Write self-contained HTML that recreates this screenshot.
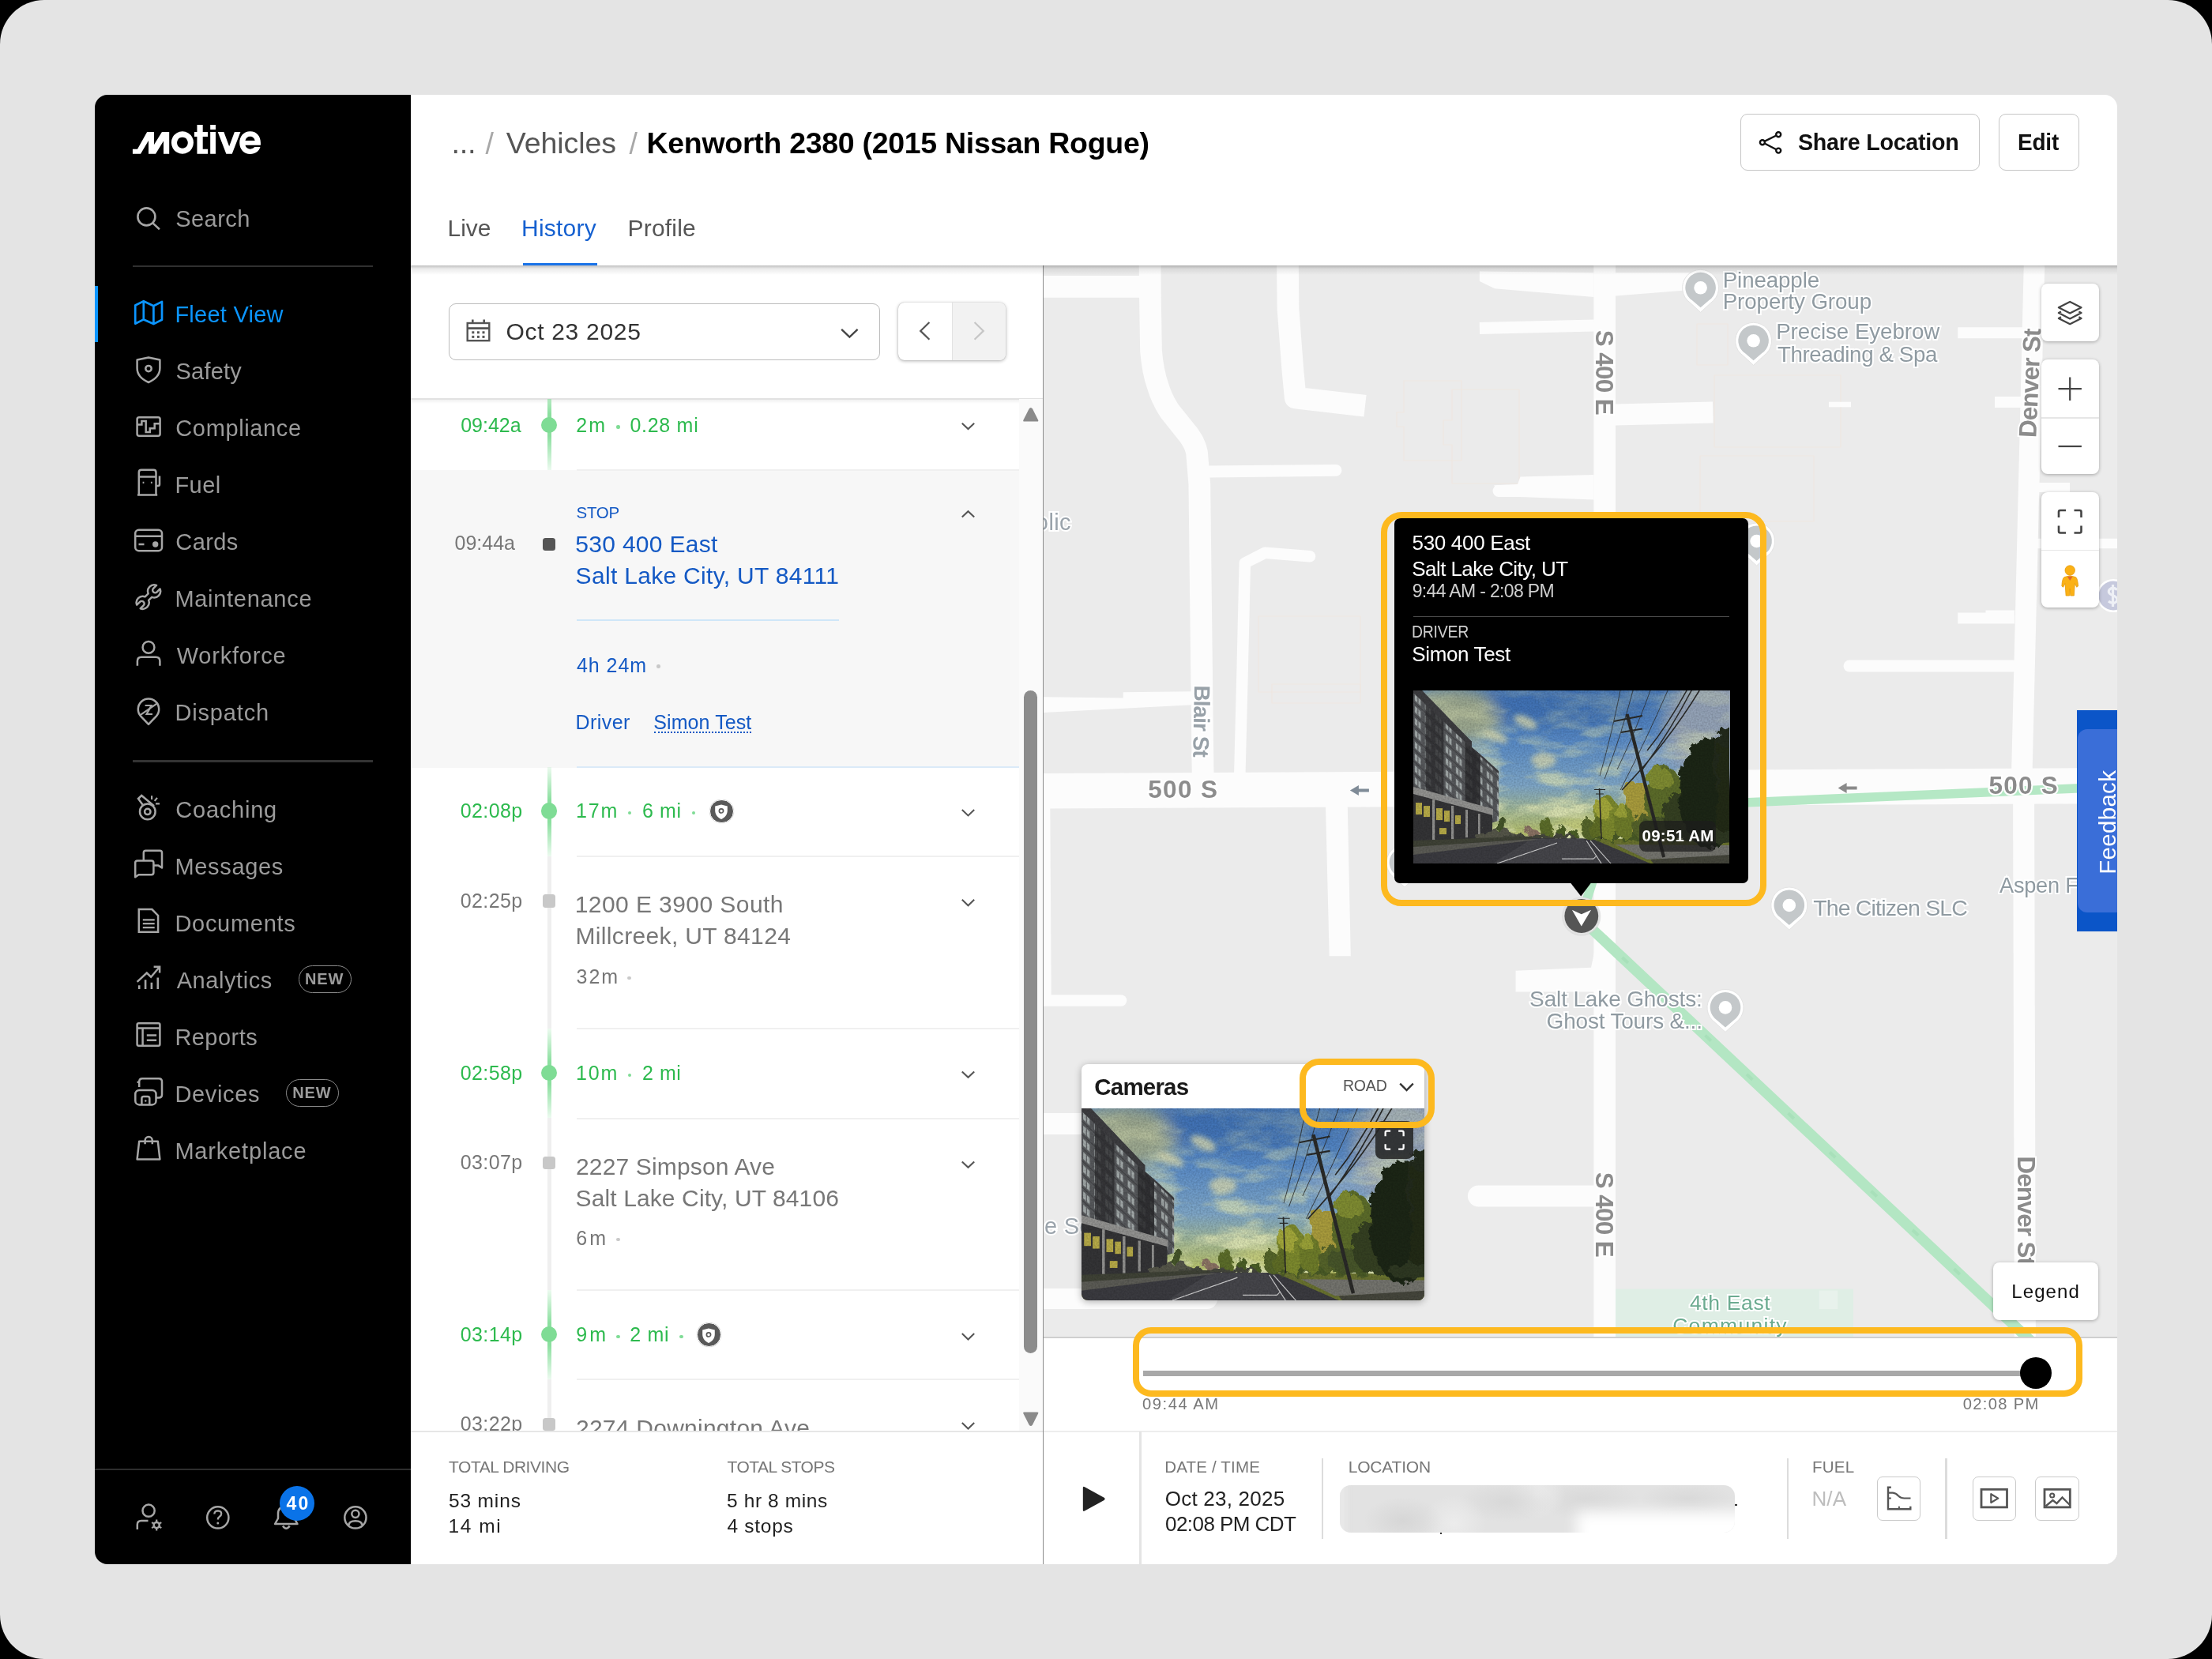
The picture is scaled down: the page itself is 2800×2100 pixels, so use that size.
<!DOCTYPE html>
<html><head><meta charset="utf-8"><title>Fleet View</title><style>
html,body{margin:0;padding:0;}
body{width:2800px;height:2100px;background:#000;overflow:hidden;position:relative;font-family:"Liberation Sans",sans-serif;}
.t{position:absolute;line-height:1;white-space:nowrap;}
.b{position:absolute;box-sizing:border-box;}
svg{position:absolute;overflow:visible;}
#page{position:absolute;left:0;top:0;width:2800px;height:2100px;background:#e4e4e4;border-radius:56px;overflow:hidden;will-change:transform;}
#app{position:absolute;left:120px;top:120px;width:2560px;height:1860px;background:#fff;border-radius:16px;overflow:hidden;}
</style></head><body><div id="page">
<div class="b" style="left:120.0px;top:120.0px;width:2560.0px;height:1860.0px;background:#fff;border-radius:16px;"></div>
<div class="b" style="left:120.0px;top:120.0px;width:400.0px;height:1860.0px;background:#000;border-radius:16px 0 0 16px;"></div>
<svg style="left:150px;top:140px" width="200" height="80" viewBox="0 0 2212 885">
<g fill="#fff">
<path d="M198 607V540H265L400 298H497V478L608 298H710V607H630V425L520 607H420V420L310 607Z"/>
<path d="M895 290a155 158 0 1 0 .1 0ZM895 372a76 78 0 1 1 -.1 0Z" fill-rule="evenodd"/>
<path d="M1100 198H1180V298H1250V365H1180V540H1250V607H1100V365H1062V298H1100Z"/>
<path d="M1285 198H1360V265H1285ZM1285 298H1360V607H1285Z"/>
<path d="M1390 298H1475L1550 500L1625 298H1708L1590 607H1508Z"/>
<path d="M1843 290C1935 290 1990 360 1990 450V485H1775C1782 520 1810 538 1845 538C1872 538 1893 528 1905 510H1985C1968 570 1915 608 1845 608C1755 608 1695 540 1695 450C1695 358 1755 290 1843 290ZM1775 420H1910C1903 385 1878 362 1843 362C1808 362 1783 385 1775 420Z" fill-rule="evenodd"/>
</g></svg>
<svg style="left:160px;top:250px" width="50" height="50" viewBox="160 250 50 50"><g fill="none" stroke="#a6a6a6" stroke-width="2.6"><circle cx="185.4" cy="274.4" r="11"/><path d="M193.4 282.4L201.9 290.2"/></g></svg>
<div class="t" style="left:222.2px;top:262.8px;font-size:29px;color:#9b9b9b;letter-spacing:0.46px;">Search</div>
<div class="b" style="left:168.0px;top:335.5px;width:304.0px;height:2.0px;background:#303030;"></div>
<div class="b" style="left:168.0px;top:961.5px;width:304.0px;height:3.0px;background:#333;"></div>
<div class="b" style="left:120.0px;top:1859.0px;width:400.0px;height:2.0px;background:#2e2e2e;"></div>
<div class="b" style="left:120.0px;top:362.0px;width:3.5px;height:71.0px;background:#0b95ff;"></div>
<div class="t" style="left:221.4px;top:383.5px;font-size:29px;color:#0b95ff;letter-spacing:0.25px;">Fleet View</div>
<div class="t" style="left:222.5px;top:455.5px;font-size:29px;color:#9b9b9b;letter-spacing:0.23px;">Safety</div>
<div class="t" style="left:222.3px;top:527.5px;font-size:29px;color:#9b9b9b;letter-spacing:0.63px;">Compliance</div>
<div class="t" style="left:221.4px;top:599.5px;font-size:29px;color:#9b9b9b;letter-spacing:0.47px;">Fuel</div>
<div class="t" style="left:222.3px;top:671.5px;font-size:29px;color:#9b9b9b;letter-spacing:0.42px;">Cards</div>
<div class="t" style="left:221.4px;top:743.5px;font-size:29px;color:#9b9b9b;letter-spacing:0.71px;">Maintenance</div>
<div class="t" style="left:223.7px;top:815.5px;font-size:29px;color:#9b9b9b;letter-spacing:0.79px;">Workforce</div>
<div class="t" style="left:221.4px;top:887.5px;font-size:29px;color:#9b9b9b;letter-spacing:0.85px;">Dispatch</div>
<div class="t" style="left:222.3px;top:1010.5px;font-size:29px;color:#9b9b9b;letter-spacing:0.76px;">Coaching</div>
<div class="t" style="left:221.4px;top:1082.5px;font-size:29px;color:#9b9b9b;letter-spacing:0.68px;">Messages</div>
<div class="t" style="left:221.4px;top:1154.5px;font-size:29px;color:#9b9b9b;letter-spacing:0.72px;">Documents</div>
<div class="t" style="left:223.7px;top:1226.5px;font-size:29px;color:#9b9b9b;letter-spacing:0.57px;">Analytics</div>
<div class="t" style="left:221.4px;top:1298.5px;font-size:29px;color:#9b9b9b;letter-spacing:0.45px;">Reports</div>
<div class="t" style="left:221.4px;top:1370.5px;font-size:29px;color:#9b9b9b;letter-spacing:0.68px;">Devices</div>
<div class="t" style="left:221.4px;top:1442.5px;font-size:29px;color:#9b9b9b;letter-spacing:0.82px;">Marketplace</div>
<svg style="left:169px;top:380px" width="38" height="36" viewBox="0 0 38 36"><g fill="none" stroke="#0b95ff" stroke-width="2.7" stroke-linejoin="round"><path d="M2.2 6.5L12.8 1.2L25.4 7.2L36 1.9V24.8L25.4 30.1L12.8 24.4L2.2 29.7Z M12.8 1.2V24.4 M25.4 7.2V30.1"/></g></svg>
<svg style="left:169px;top:452px" width="38" height="36" viewBox="0 0 38 36"><g fill="none" stroke="#a6a6a6" stroke-width="2.5" stroke-linejoin="round"><path d="M19 0.5L4.6 3.4V14C4.6 22 10 28 19 32C28 28 33.4 22 33.4 14V3.4Z"/><circle cx="19" cy="14.6" r="3.7"/></g></svg>
<svg style="left:169px;top:524px" width="38" height="36" viewBox="0 0 38 36"><g fill="none" stroke="#a6a6a6" stroke-width="2.5" stroke-linejoin="round"><rect x="4.6" y="4.2" width="29" height="23.6" rx="2.5"/><path d="M4.6 13.6H10.4V9H15.7V22.9H20.8V18.3H26.7V12.3H33.6" stroke-linejoin="miter"/></g></svg>
<svg style="left:169px;top:596px" width="38" height="36" viewBox="0 0 38 36"><g fill="none" stroke="#a6a6a6" stroke-width="2.5" stroke-linejoin="round"><path d="M6.8 30.4V2Q6.8 -1.2 10 -1.2H25.3Q28.5 -1.2 28.5 2V30.4 M5 30.4H30.2 M6.8 7.6H28.5 M28.5 19H31Q33 19 33 17V6.5"/><path d="M11.6 14.8h1.8M21.9 14.8h1.8" stroke-width="2.2"/></g></svg>
<svg style="left:169px;top:668px" width="38" height="36" viewBox="0 0 38 36"><g fill="none" stroke="#a6a6a6" stroke-width="2.5" stroke-linejoin="round"><rect x="2.2" y="2.8" width="33.8" height="26.5" rx="4.5"/><path d="M2.2 10.8H36 M6.5 21H13.5"/><circle cx="27.7" cy="21" r="3.7" fill="#a6a6a6" stroke="none"/></g></svg>
<svg style="left:169px;top:740px" width="38" height="36" viewBox="0 0 38 36"><g transform="translate(18.9,15.6) rotate(-45)"><path d="M2.87 -3.2A8 8 0 0 1 17.53 -3.2L12 -3.2A3.2 3.2 0 0 0 12 3.2L17.53 3.2A8 8 0 0 1 2.87 3.2L-2.87 3.2A8 8 0 0 1 -17.53 3.2L-12 3.2A3.2 3.2 0 0 0 -12 -3.2L-17.53 -3.2A8 8 0 0 1 -2.87 -3.2Z" fill="none" stroke="#a6a6a6" stroke-width="2.5" stroke-linejoin="round"/></g></svg>
<svg style="left:169px;top:812px" width="38" height="36" viewBox="0 0 38 36"><g fill="none" stroke="#a6a6a6" stroke-width="2.5" stroke-linejoin="round"><circle cx="19" cy="7.4" r="7.4"/><path d="M4.9 30.8V25Q4.9 19.8 10 19.8H28.3Q33.4 19.8 33.4 25V30.8"/></g></svg>
<svg style="left:169px;top:884px" width="38" height="36" viewBox="0 0 38 36"><g fill="none" stroke="#a6a6a6" stroke-width="2.5" stroke-linejoin="round"><path d="M19 32.8L9.2 22.6A13.2 13.2 0 1 1 28.8 22.6Z"/><path d="M8.2 21.3L31 5.6" stroke-width="2.2"/><path d="M14.6 9H22.6L16.6 20H24" stroke-width="2.2" stroke-linejoin="miter"/></g></svg>
<svg style="left:169px;top:1007px" width="38" height="36" viewBox="0 0 38 36"><g fill="none" stroke="#a6a6a6" stroke-width="2.5" stroke-linejoin="round"><circle cx="17.8" cy="20.4" r="9.8"/><circle cx="17.8" cy="20.4" r="3.7"/><path d="M12.2 12.4L6 4L10.2 0L26 13.2" stroke-linejoin="miter"/><path d="M23.1 0.2V4.9M30 2.9L26.7 6.9M28 10.4H33" stroke-width="2.2"/></g></svg>
<svg style="left:169px;top:1079px" width="38" height="36" viewBox="0 0 38 36"><g fill="none" stroke="#a6a6a6" stroke-width="2.5" stroke-linejoin="round"><path d="M12.8 10V0.5Q12.8 -2.2 15.5 -2.2H33.3Q36 -2.2 36 0.5V19.5L31.5 16.6H26"/><path d="M2.2 31.2V13Q2.2 10.4 5 10.4H22.7Q25.4 10.4 25.4 13V25.6Q25.4 28.3 22.7 28.3H6.5Z"/></g></svg>
<svg style="left:169px;top:1151px" width="38" height="36" viewBox="0 0 38 36"><g fill="none" stroke="#a6a6a6" stroke-width="2.5" stroke-linejoin="round"><path d="M6.8 0.1H23.4L31.1 8V28.8H6.8Z" stroke-linejoin="miter"/><path d="M11.8 13.3H26.7M11.8 18.2H26.7M11.8 23.2H26.7" stroke-width="2.3"/></g></svg>
<svg style="left:169px;top:1223px" width="38" height="36" viewBox="0 0 38 36"><g fill="none" stroke="#a6a6a6" stroke-width="2.5" stroke-linejoin="round"><path d="M7.2 24.2V29.1M15.1 17.2V29.1M22.9 20.7V29.1M30.8 14.6V29.1" stroke-width="2.6"/><path d="M4.6 19.8L16.8 8.5L22.1 13.7L33.1 0.8M25.6 0.8H33.1V8.5" stroke-linejoin="miter"/></g></svg>
<svg style="left:169px;top:1295px" width="38" height="36" viewBox="0 0 38 36"><g fill="none" stroke="#a6a6a6" stroke-width="2.5" stroke-linejoin="round"><rect x="4.6" y="0.3" width="28.8" height="28.4" rx="2"/><path d="M4.6 6.4H33.4M11.6 6.4V28.7M16.8 15.5H29.1M16.8 21.7H29.1"/></g></svg>
<svg style="left:169px;top:1367px" width="38" height="36" viewBox="0 0 38 36"><g fill="none" stroke="#a6a6a6" stroke-width="2.5" stroke-linejoin="round"><path d="M4.6 2.8H7.2M7.2 9V2.2Q7.2 -1.8 11.2 -1.8H32Q36 -1.8 36 2.2V18.6Q36 22.6 32 22.6H28.5"/><rect x="2.3" y="13" width="26.2" height="18.4" rx="5"/><path d="M10.4 31.4V23.4Q10.4 20.9 12.9 20.9H17.8Q20.3 20.9 20.3 23.4V31.4"/><circle cx="15.3" cy="26.5" r="1.2" fill="#a6a6a6" stroke="none"/></g></svg>
<svg style="left:169px;top:1439px" width="38" height="36" viewBox="0 0 38 36"><g fill="none" stroke="#a6a6a6" stroke-width="2.5" stroke-linejoin="round"><path d="M7.2 5.7H30.8L33.4 28.4H4.6Z"/><path d="M14.6 9.2V4.7A4.6 4.6 0 0 1 23.8 4.7V9.2"/></g></svg>
<div class="b" style="left:377.5px;top:1222.0px;width:67.0px;height:35.0px;border:1.6px solid #8a8a8a;border-radius:18px;"></div>
<div class="t" style="left:386.0px;top:1229.3px;font-size:20px;color:#9b9b9b;font-weight:700;letter-spacing:0.85px;">NEW</div>
<div class="b" style="left:361.7px;top:1366.0px;width:67.0px;height:35.0px;border:1.6px solid #8a8a8a;border-radius:18px;"></div>
<div class="t" style="left:370.2px;top:1373.3px;font-size:20px;color:#9b9b9b;font-weight:700;letter-spacing:0.85px;">NEW</div>
<svg style="left:160px;top:1880px" width="340" height="80" viewBox="160 1880 340 80"><g fill="none" stroke="#a6a6a6" stroke-width="2.5">
<circle cx="188.1" cy="1912.2" r="7.6"/><path d="M173.8 1936V1930Q173.8 1925 178.8 1925H187.5"/>
<circle cx="198.2" cy="1930.6" r="3.6"/><path d="M198.2 1923.6v3.4M198.2 1934.2v3.4M192.1 1927.1l3 1.7M201.3 1932.4l3 1.7M192.1 1934.1l3 -1.7M201.3 1928.8l3 -1.7" stroke-width="2.2"/>
<circle cx="275.8" cy="1920.9" r="13.6"/>
<path d="M271.3 1916.5Q271.6 1912.3 275.9 1912.3Q280.2 1912.5 280.2 1916Q280.2 1918.3 277.9 1919.7Q275.8 1921 275.8 1923.6" stroke-width="2.3"/><circle cx="275.8" cy="1928" r="1.5" fill="#a6a6a6" stroke="none"/>
<path d="M352 1916Q352 1907 362.3 1907Q372.6 1907 372.6 1916V1922L376.5 1929H348.1L352 1922Z" stroke-linejoin="round"/><path d="M358 1931.5Q362.3 1938 366.6 1931.5"/>
<circle cx="449.9" cy="1920.9" r="13.6"/><circle cx="449.9" cy="1916.3" r="4.6"/><path d="M441.6 1930.6Q441.6 1925.2 449.9 1925.2Q458.2 1925.2 458.2 1930.6"/>
</g></svg>
<div class="b" style="left:353.5px;top:1880.7px;width:44.6px;height:44.6px;background:#0a73e8;border-radius:50%;"></div>
<div class="t" style="left:362.5px;top:1892.0px;font-size:23px;color:#fff;font-weight:700;letter-spacing:2.21px;">40</div>
<div class="t" style="left:571.5px;top:162.0px;font-size:38px;color:#555;letter-spacing:-0.3px;">...</div>
<div class="t" style="left:614.5px;top:162.5px;font-size:37.5px;color:#a8a8a8;transform:scaleY(1.05);">/</div>
<div class="t" style="left:640.8px;top:162.5px;font-size:37.5px;color:#555;letter-spacing:-0.05px;">Vehicles</div>
<div class="t" style="left:796.5px;top:162.5px;font-size:37.5px;color:#a8a8a8;transform:scaleY(1.05);">/</div>
<div class="t" style="left:818.5px;top:162.5px;font-size:37.5px;color:#000;font-weight:700;letter-spacing:-0.30px;">Kenworth 2380 (2015 Nissan Rogue)</div>
<div class="b" style="left:2203.0px;top:144.0px;width:302.5px;height:72.0px;border:1.6px solid #c6c6c6;border-radius:9px;background:#fff;"></div>
<div class="b" style="left:2530.0px;top:144.0px;width:101.6px;height:72.0px;border:1.6px solid #c6c6c6;border-radius:9px;background:#fff;"></div>
<svg style="left:2220px;top:160px" width="40" height="40" viewBox="2220 160 40 40"><g fill="none" stroke="#111" stroke-width="2.4"><path d="M2233.6 178.9L2248.5 171.5M2233.6 181.5L2248.5 189.3"/><circle cx="2230.9" cy="180.2" r="3"/><circle cx="2251.2" cy="170.2" r="3"/><circle cx="2251.2" cy="190.6" r="3"/></g></svg>
<div class="t" style="left:2276.2px;top:164.5px;font-size:30px;color:#111;font-weight:700;letter-spacing:-0.25px;transform:scaleX(0.9548);transform-origin:0 50%;">Share Location</div>
<div class="t" style="left:2553.6px;top:164.5px;font-size:30px;color:#111;font-weight:700;letter-spacing:-0.25px;transform:scaleX(0.9339);transform-origin:0 50%;">Edit</div>
<div class="t" style="left:566.5px;top:274.0px;font-size:30px;color:#555;letter-spacing:-0.01px;">Live</div>
<div class="t" style="left:660.0px;top:274.0px;font-size:30px;color:#1560d0;letter-spacing:0.23px;">History</div>
<div class="t" style="left:794.5px;top:274.0px;font-size:30px;color:#555;letter-spacing:0.21px;">Profile</div>
<div class="b" style="left:662.3px;top:332.6px;width:94.1px;height:3.6px;background:#1a73e8;"></div>
<div class="b" style="left:568.0px;top:384.0px;width:545.5px;height:72.0px;border:1.6px solid #bcbcbc;border-radius:9px;background:#fff;"></div>
<svg style="left:588px;top:402px" width="36" height="34" viewBox="588 402 36 34"><g fill="none" stroke="#555" stroke-width="2.4"><rect x="591.7" y="409" width="27.6" height="22.2"/><path d="M591.7 415.6H619.3" stroke-width="2.8"/><path d="M598.3 404.6V409M612.7 404.6V409" stroke-width="2.6"/></g><g fill="#555"><rect x="597.3" y="419.3" width="3" height="3"/><rect x="603.9" y="419.3" width="3" height="3"/><rect x="610.5" y="419.3" width="3" height="3"/><rect x="597.3" y="424.9" width="3" height="3"/><rect x="603.9" y="424.9" width="3" height="3"/><rect x="610.5" y="424.9" width="3" height="3"/></g></svg>
<div class="t" style="left:640.4px;top:405.1px;font-size:30px;color:#333;letter-spacing:0.70px;">Oct 23 2025</div>
<svg style="left:1060px;top:410px" width="30" height="24" viewBox="1060 410 30 24"><path d="M1065.2 416.8L1075.4 426.6L1085.6 416.8" fill="none" stroke="#444" stroke-width="2.3"/></svg>
<div class="b" style="left:1137.0px;top:383.0px;width:135.8px;height:73.3px;border-radius:8px;background:#fff;box-shadow:0 1px 4px rgba(0,0,0,.32),0 0 1px rgba(0,0,0,.3);"></div>
<div class="b" style="left:1205.0px;top:383.0px;width:67.8px;height:73.3px;border-radius:0 8px 8px 0;background:#f2f2f2;border-left:1.5px solid #e2e2e2;"></div>
<svg style="left:1150px;top:400px" width="110" height="40" viewBox="1150 400 110 40"><path d="M1176.4 408L1165.2 418.9L1176.4 429.8" fill="none" stroke="#555" stroke-width="2.2"/><path d="M1233.6 408L1244.8 418.9L1233.6 429.8" fill="none" stroke="#c6c6c6" stroke-width="2.2"/></svg>
<div class="b" style="left:520.0px;top:503.6px;width:800.0px;height:2.2px;background:#e2e2e2;"></div>
<div class="b" style="left:520.0px;top:505.8px;width:770.0px;height:5.0px;background:linear-gradient(#f1f1f1,#fff);"></div>
<div class="b" style="left:520px;top:505px;width:800px;height:1306px;overflow:hidden;">
<div class="b" style="left:0.0px;top:90.0px;width:770.0px;height:376.5px;background:#f7f7f7;"></div>
<div class="b" style="left:210.0px;top:465.0px;width:560.0px;height:2.0px;background:#dbeaf8;"></div>
<div class="b" style="left:172.6px;top:-23.0px;width:5.0px;height:113.0px;background:linear-gradient(rgba(127,220,149,.15),rgba(127,220,149,.9) 37%,rgba(127,220,149,.9) 62%,rgba(127,220,149,.15));"></div>
<div class="b" style="left:172.6px;top:466.0px;width:5.0px;height:113.0px;background:linear-gradient(rgba(127,220,149,.15),rgba(127,220,149,.9) 37%,rgba(127,220,149,.9) 62%,rgba(127,220,149,.15));"></div>
<div class="b" style="left:172.6px;top:579.0px;width:5.0px;height:218.0px;background:#efefef;"></div>
<div class="b" style="left:172.6px;top:797.0px;width:5.0px;height:113.0px;background:linear-gradient(rgba(127,220,149,.15),rgba(127,220,149,.9) 37%,rgba(127,220,149,.9) 62%,rgba(127,220,149,.15));"></div>
<div class="b" style="left:172.6px;top:910.0px;width:5.0px;height:218.0px;background:#efefef;"></div>
<div class="b" style="left:172.6px;top:1128.0px;width:5.0px;height:113.0px;background:linear-gradient(rgba(127,220,149,.15),rgba(127,220,149,.9) 37%,rgba(127,220,149,.9) 62%,rgba(127,220,149,.15));"></div>
<div class="b" style="left:172.6px;top:1241.0px;width:5.0px;height:84.0px;background:#efefef;"></div>
<div class="b" style="left:210.0px;top:89.0px;width:560.0px;height:2.0px;background:#f0f0f0;"></div>
<div class="b" style="left:210.0px;top:578.0px;width:560.0px;height:2.0px;background:#f0f0f0;"></div>
<div class="b" style="left:210.0px;top:796.0px;width:560.0px;height:2.0px;background:#f0f0f0;"></div>
<div class="b" style="left:210.0px;top:909.5px;width:560.0px;height:2.0px;background:#f0f0f0;"></div>
<div class="b" style="left:210.0px;top:1127.0px;width:560.0px;height:2.0px;background:#f0f0f0;"></div>
<div class="b" style="left:210.0px;top:1240.0px;width:560.0px;height:2.0px;background:#f0f0f0;"></div>
<div class="t" style="left:63.2px;top:21.3px;font-size:25px;color:#2dba4e;letter-spacing:0.00px;">09:42a</div>
<div class="b" style="left:164.7px;top:22.6px;width:20.8px;height:20.8px;background:#7fdc95;border-radius:50%;"></div>
<div class="t" style="left:209.2px;top:21.3px;font-size:25px;color:#2dba4e;letter-spacing:2.18px;">2m</div>
<div class="b" style="left:260.3px;top:33.3px;width:4.4px;height:4.4px;background:#7fdc95;border-radius:50%;"></div>
<div class="t" style="left:277.5px;top:21.3px;font-size:25px;color:#2dba4e;letter-spacing:0.70px;">0.28 mi</div>
<svg style="left:0;top:0" width="800" height="1306"><path d="M697.8 30.699999999999953L705.5 38.09999999999995L713.2 30.699999999999953" fill="none" stroke="#555" stroke-width="2.1"/></svg>
<div class="t" style="left:55.5px;top:170.4px;font-size:25px;color:#777;letter-spacing:0.00px;">09:44a</div>
<div class="b" style="left:166.8px;top:176.0px;width:16.6px;height:16.2px;background:#555;border-radius:3.5px;"></div>
<div class="t" style="left:209.6px;top:133.5px;font-size:20.5px;color:#1459c4;letter-spacing:-0.28px;">STOP</div>
<div class="t" style="left:208.3px;top:169.2px;font-size:30px;color:#1459c4;letter-spacing:0.30px;">530 400 East</div>
<div class="t" style="left:208.6px;top:208.9px;font-size:30px;color:#1459c4;letter-spacing:0.31px;">Salt Lake City, UT 84111</div>
<div class="b" style="left:210.0px;top:279.0px;width:332.0px;height:1.6px;background:#cfe6f8;"></div>
<div class="t" style="left:209.9px;top:324.7px;font-size:25px;color:#1459c4;letter-spacing:0.97px;">4h 24m</div>
<div class="b" style="left:311.4px;top:336.3px;width:4.4px;height:4.4px;background:#c9c9c9;border-radius:50%;"></div>
<div class="t" style="left:208.4px;top:396.6px;font-size:25px;color:#1459c4;letter-spacing:0.46px;">Driver</div>
<div class="t" style="left:307.3px;top:396.6px;font-size:25px;color:#1459c4;letter-spacing:0.08px;">Simon Test</div>
<div class="b" style="left:308.4px;top:420.6px;width:122.6px;height:0.0px;border-bottom:2px dotted #1459c4;"></div>
<svg style="left:0;top:0" width="800" height="1306"><path d="M697.8 149.6L705.5 142.2L713.2 149.6" fill="none" stroke="#555" stroke-width="2.1"/></svg>
<div class="t" style="left:62.8px;top:509.1px;font-size:25px;color:#2dba4e;letter-spacing:0.37px;">02:08p</div>
<div class="b" style="left:164.7px;top:511.1px;width:20.8px;height:20.8px;background:#7fdc95;border-radius:50%;"></div>
<div class="t" style="left:209.1px;top:509.1px;font-size:25px;color:#2dba4e;letter-spacing:1.86px;">17m</div>
<div class="b" style="left:274.6px;top:521.8px;width:4.4px;height:4.4px;background:#7fdc95;border-radius:50%;"></div>
<div class="t" style="left:292.9px;top:509.1px;font-size:25px;color:#2dba4e;letter-spacing:0.61px;">6 mi</div>
<div class="b" style="left:356.1px;top:521.8px;width:4.4px;height:4.4px;background:#7fdc95;border-radius:50%;"></div>
<div class="b" style="left:378.0px;top:506.6px;width:30.8px;height:30.8px;background:#595959;border-radius:50%;border:1.2px solid #fff;box-shadow:0 0 1px rgba(0,0,0,.25);"></div>
<svg style="left:377.4px;top:506px" width="32" height="32" viewBox="-16 -16 32 32"><path d="M0 -8.6L-7.8 -6.4V-1C-7.8 4.5 -4 8.2 0 10C4 8.2 7.8 4.5 7.8 -1V-6.4Z" fill="#fff"/><circle cx="0" cy="-0.6" r="2.6" fill="none" stroke="#595959" stroke-width="1.7"/></svg>
<svg style="left:0;top:0" width="800" height="1306"><path d="M697.8 519.9999999999999L705.5 527.3999999999999L713.2 519.9999999999999" fill="none" stroke="#555" stroke-width="2.1"/></svg>
<div class="t" style="left:62.8px;top:623.0px;font-size:25px;color:#777;letter-spacing:0.37px;">02:25p</div>
<div class="b" style="left:166.8px;top:627.4px;width:16.6px;height:16.2px;background:#c8c8c8;border-radius:3.5px;"></div>
<div class="t" style="left:207.7px;top:625.1px;font-size:30px;color:#777;letter-spacing:0.43px;">1200 E 3900 South</div>
<div class="t" style="left:208.5px;top:665.2px;font-size:30px;color:#777;letter-spacing:0.34px;">Millcreek, UT 84124</div>
<div class="t" style="left:209.5px;top:719.4px;font-size:25px;color:#777;letter-spacing:1.98px;">32m</div>
<div class="b" style="left:274.3px;top:730.8px;width:4.4px;height:4.4px;background:#c9c9c9;border-radius:50%;"></div>
<svg style="left:0;top:0" width="800" height="1306"><path d="M697.8 633.8000000000001L705.5 641.2L713.2 633.8000000000001" fill="none" stroke="#555" stroke-width="2.1"/></svg>
<div class="t" style="left:62.8px;top:841.4px;font-size:25px;color:#2dba4e;letter-spacing:0.37px;">02:58p</div>
<div class="b" style="left:164.7px;top:842.6px;width:20.8px;height:20.8px;background:#7fdc95;border-radius:50%;"></div>
<div class="t" style="left:209.1px;top:841.4px;font-size:25px;color:#2dba4e;letter-spacing:1.86px;">10m</div>
<div class="b" style="left:274.6px;top:853.8px;width:4.4px;height:4.4px;background:#7fdc95;border-radius:50%;"></div>
<div class="t" style="left:292.9px;top:841.4px;font-size:25px;color:#2dba4e;letter-spacing:0.60px;">2 mi</div>
<svg style="left:0;top:0" width="800" height="1306"><path d="M697.8 851.4L705.5 858.8L713.2 851.4" fill="none" stroke="#555" stroke-width="2.1"/></svg>
<div class="t" style="left:62.8px;top:954.0px;font-size:25px;color:#777;letter-spacing:0.37px;">03:07p</div>
<div class="b" style="left:166.8px;top:958.5px;width:16.6px;height:16.2px;background:#c8c8c8;border-radius:3.5px;"></div>
<div class="t" style="left:209.0px;top:957.2px;font-size:30px;color:#777;letter-spacing:0.15px;">2227 Simpson Ave</div>
<div class="t" style="left:208.6px;top:997.2px;font-size:30px;color:#777;letter-spacing:0.11px;">Salt Lake City, UT 84106</div>
<div class="t" style="left:209.2px;top:1050.4px;font-size:25px;color:#777;letter-spacing:3.19px;">6m</div>
<div class="b" style="left:260.3px;top:1061.8px;width:4.4px;height:4.4px;background:#c9c9c9;border-radius:50%;"></div>
<svg style="left:0;top:0" width="800" height="1306"><path d="M697.8 965.4L705.5 972.8L713.2 965.4" fill="none" stroke="#555" stroke-width="2.1"/></svg>
<div class="t" style="left:62.8px;top:1172.0px;font-size:25px;color:#2dba4e;letter-spacing:0.37px;">03:14p</div>
<div class="b" style="left:164.7px;top:1173.6px;width:20.8px;height:20.8px;background:#7fdc95;border-radius:50%;"></div>
<div class="t" style="left:209.3px;top:1172.0px;font-size:25px;color:#2dba4e;letter-spacing:3.09px;">9m</div>
<div class="b" style="left:260.3px;top:1184.8px;width:4.4px;height:4.4px;background:#7fdc95;border-radius:50%;"></div>
<div class="t" style="left:277.2px;top:1172.0px;font-size:25px;color:#2dba4e;letter-spacing:0.74px;">2 mi</div>
<div class="b" style="left:340.3px;top:1184.8px;width:4.4px;height:4.4px;background:#7fdc95;border-radius:50%;"></div>
<div class="b" style="left:362.0px;top:1169.1px;width:30.8px;height:30.8px;background:#595959;border-radius:50%;border:1.2px solid #fff;box-shadow:0 0 1px rgba(0,0,0,.25);"></div>
<svg style="left:361.4px;top:1168.5px" width="32" height="32" viewBox="-16 -16 32 32"><path d="M0 -8.6L-7.8 -6.4V-1C-7.8 4.5 -4 8.2 0 10C4 8.2 7.8 4.5 7.8 -1V-6.4Z" fill="#fff"/><circle cx="0" cy="-0.6" r="2.6" fill="none" stroke="#595959" stroke-width="1.7"/></svg>
<svg style="left:0;top:0" width="800" height="1306"><path d="M697.8 1183.1000000000001L705.5 1190.5L713.2 1183.1000000000001" fill="none" stroke="#555" stroke-width="2.1"/></svg>
<div class="t" style="left:62.8px;top:1285.0px;font-size:25px;color:#777;letter-spacing:0.37px;">03:22p</div>
<div class="b" style="left:166.8px;top:1289.6px;width:16.6px;height:16.2px;background:#c8c8c8;border-radius:3.5px;"></div>
<div class="t" style="left:209.0px;top:1288.0px;font-size:30px;color:#777;letter-spacing:0.25px;">2274 Downington Ave</div>
<svg style="left:0;top:0" width="800" height="1306"><path d="M697.8 1296.1000000000001L705.5 1303.5L713.2 1296.1000000000001" fill="none" stroke="#555" stroke-width="2.1"/></svg>
<div class="b" style="left:770.0px;top:0.0px;width:30.0px;height:1306.0px;background:#fafafa;"></div>
<div class="b" style="left:776.2px;top:369.0px;width:17.0px;height:839.0px;background:#8c8c8c;border-radius:9px;"></div>
<svg style="left:770px;top:0" width="30" height="1306"><path d="M6.5 28.5L23 28.5Q25 28.5 24 26.5L17 12.5Q14.8 9.5 12.6 12.5L5.5 26.5Q4.5 28.5 6.5 28.5Z" fill="#8a8a8a"/><path d="M6.5 1282.5L23 1282.5Q25 1282.5 24 1284.5L17 1298.5Q14.8 1301.5 12.6 1298.5L5.5 1284.5Q4.5 1282.5 6.5 1282.5Z" fill="#8a8a8a"/></svg>
</div>
<div class="b" style="left:1319.7px;top:336.0px;width:1.4px;height:1644.0px;background:#8c8c8c;"></div>
<div class="b" style="left:520.0px;top:1810.5px;width:800.0px;height:2.0px;background:#e6e6e6;"></div>
<div class="t" style="left:568.0px;top:1846.2px;font-size:21px;color:#777;letter-spacing:-0.44px;">TOTAL DRIVING</div>
<div class="t" style="left:920.5px;top:1846.2px;font-size:21px;color:#777;letter-spacing:-0.52px;">TOTAL STOPS</div>
<div class="t" style="left:568.0px;top:1887.9px;font-size:24.5px;color:#222;letter-spacing:0.85px;">53 mins</div>
<div class="t" style="left:567.6px;top:1920.1px;font-size:24.5px;color:#222;letter-spacing:1.53px;">14 mi</div>
<div class="t" style="left:920.0px;top:1887.9px;font-size:24.5px;color:#222;letter-spacing:0.61px;">5 hr 8 mins</div>
<div class="t" style="left:920.4px;top:1920.1px;font-size:24.5px;color:#222;letter-spacing:0.74px;">4 stops</div>
<svg style="left:1321px;top:336px;overflow:hidden" width="1359" height="1357" viewBox="1321 336 1359 1357"><rect x="1321" y="336" width="1359" height="1357" fill="#ebebeb"/><rect x="2045" y="1631.6" width="301" height="62" fill="#dfeee5"/><rect x="2302.7" y="1633.5" width="23.5" height="23.5" fill="#e8f2ec"/><g fill="none" stroke="#efe6e0" stroke-width="1.2" opacity=".9"><path d="M1777 482H1850V583H1777V540H1768V522H1777Z"/><path d="M1593 780H1722V876H1593Z"/><path d="M1838 493H1923V612H1838V563H1827V532H1838Z"/><path d="M2148 410H2187V462H2148Z"/><path d="M2170 475H2330V566H2170Z"/><path d="M2152 577H2296V660H2152Z"/><path d="M1610 866H1722V890H1610Z"/></g><polygon points="1321,979.1 2680,972 2680,1017.2 1321,1023.4" fill="#fcfcfc"/><path d="M2031.2 336V1693" fill="none" stroke="#fcfcfc" stroke-width="27.7" stroke-linecap="butt" stroke-linejoin="round"/><path d="M2575 336L2559.3 979" fill="none" stroke="#fcfcfc" stroke-width="26.5" stroke-linecap="butt" stroke-linejoin="round"/><path d="M2561.6 1017L2563.4 1693" fill="none" stroke="#fcfcfc" stroke-width="27" stroke-linecap="butt" stroke-linejoin="round"/><path d="M1321 362.8H1456" fill="none" stroke="#fcfcfc" stroke-width="27.7" stroke-linecap="butt" stroke-linejoin="round"/><path d="M1455.6 330L1455.9 376L1457 443.6Q1459 470 1466 489.7Q1471 506 1480.5 520.4L1505 551Q1513 562 1515 572.7L1518.3 612.7L1522.6 980" fill="none" stroke="#fcfcfc" stroke-width="27.7" stroke-linecap="butt" stroke-linejoin="round"/><path d="M1629.9 330L1630.5 391.3L1636.6 471.3L1639.7 503.5L1728 513.7" fill="none" stroke="#fcfcfc" stroke-width="27.7" stroke-linecap="butt" stroke-linejoin="round"/><path d="M1528 597L1691 595.4" fill="none" stroke="#fcfcfc" stroke-width="14.8" stroke-linecap="round" stroke-linejoin="round"/><path d="M1569.3 980L1572.7 846L1575.8 712.6L1601.3 699.7L1658 704.3" fill="none" stroke="#fcfcfc" stroke-width="14.5" stroke-linecap="round" stroke-linejoin="round"/><polygon points="1872.9,343.5 2017.5,345.2 2017.5,376 1892,365.2 1872.9,356" fill="#fcfcfc"/><polygon points="2045,345.2 2140,345.2 2140,367 2045,374.4" fill="#fcfcfc"/><path d="M1872.9 415.5L2018 412" fill="none" stroke="#fcfcfc" stroke-width="14.8" stroke-linecap="butt" stroke-linejoin="round"/><path d="M2044 525L2168.3 522" fill="none" stroke="#fcfcfc" stroke-width="27" stroke-linecap="butt" stroke-linejoin="round"/><polygon points="1891.3,614.2 1921,613 1924.5,603.4 2017.5,601 2017.5,632.6 1897,628 Q1889,622 1891.3,614.2" fill="#fcfcfc"/><path d="M1897 614H1930V629H1897A7.5 7.5 0 0 1 1897 614Z" fill="#fcfcfc"/><path d="M2478.3 421.3H2566" fill="none" stroke="#fcfcfc" stroke-width="14" stroke-linecap="butt" stroke-linejoin="round"/><path d="M2525 509H2563" fill="none" stroke="#fcfcfc" stroke-width="14" stroke-linecap="butt" stroke-linejoin="round"/><path d="M2315 512H2343" fill="none" stroke="#fcfcfc" stroke-width="6.5" stroke-linecap="butt" stroke-linejoin="round"/><path d="M2478.3 782.5H2550" fill="none" stroke="#fcfcfc" stroke-width="14" stroke-linecap="butt" stroke-linejoin="round"/><path d="M2513.5 775.6H2550" fill="none" stroke="#fcfcfc" stroke-width="6" stroke-linecap="butt" stroke-linejoin="round"/><path d="M2574 688H2680" fill="none" stroke="#fcfcfc" stroke-width="12.5" stroke-linecap="butt" stroke-linejoin="round"/><path d="M2574 617H2620" fill="none" stroke="#fcfcfc" stroke-width="12" stroke-linecap="butt" stroke-linejoin="round"/><path d="M2341 843H2548" fill="none" stroke="#fcfcfc" stroke-width="15" stroke-linecap="round" stroke-linejoin="round"/><polygon points="1321,882.3 1421.8,883.5 1421.8,876.2 1509,875.2 1509,892.2 1321,902" fill="#fcfcfc"/><polygon points="1678,1020 1705.8,1020 1709.8,1210.3 1682.7,1210.3" fill="#fcfcfc"/><polygon points="1321,1020 1329.3,1020 1330.8,1266 1321,1266" fill="#fcfcfc"/><path d="M1321 1266.5H1419" fill="none" stroke="#fcfcfc" stroke-width="14.5" stroke-linecap="round" stroke-linejoin="round"/><path d="M1321 1422.5H1400" fill="none" stroke="#fcfcfc" stroke-width="27" stroke-linecap="butt" stroke-linejoin="round"/><path d="M1321 1644H1528" fill="none" stroke="#fcfcfc" stroke-width="26" stroke-linecap="round" stroke-linejoin="round"/><polygon points="1918.6,1228.8 2014,1224.8 2018,1206 2018,1255.5 1918.6,1255.5" fill="#fcfcfc"/><path d="M1871.3 1514H2018" fill="none" stroke="#fcfcfc" stroke-width="26.8" stroke-linecap="round" stroke-linejoin="round"/><path d="M2680 995.8L2213 1015.7L2046 1021.5L2001.8 1160" fill="none" stroke="#b5e8c5" stroke-width="11.5" stroke-linejoin="round"/><path d="M2001.8 1162L2017 1177.8L2583 1709" fill="none" stroke="#b3e6c3" stroke-width="13.5"/><path d="M2001.8 1162L2017 1177.8L2583 1709" fill="none" stroke="#a5deb8" stroke-width="4" stroke-dasharray="10 62" opacity=".8"/><path d="M1708.9 1000.6L1719.9 994.1V998.6H1732.9V1002.6H1719.9V1007.1Z" fill="#7f8b97"/><path d="M2326.6 997.6L2337.6 991.1V995.6H2350.6V999.6H2337.6V1004.1Z" fill="#8a8a8a"/><g transform="translate(2152.6,364.3)"><path d="M0 31L-13 19A23 23 0 1 1 13 19Z" fill="#fff" stroke="#e3e3e3" stroke-width="1"/><path d="M0 25L-10.5 16A19.3 19.3 0 1 1 10.5 16Z" fill="#c4c8ca"/><circle r="8.3" fill="#fff"/></g><g transform="translate(2219.6,431.3)"><path d="M0 31L-13 19A23 23 0 1 1 13 19Z" fill="#fff" stroke="#e3e3e3" stroke-width="1"/><path d="M0 25L-10.5 16A19.3 19.3 0 1 1 10.5 16Z" fill="#c4c8ca"/><circle r="8.3" fill="#fff"/></g><g transform="translate(2223.6,685)"><path d="M0 31L-13 19A23 23 0 1 1 13 19Z" fill="#fff" stroke="#e3e3e3" stroke-width="1"/><path d="M0 25L-10.5 16A19.3 19.3 0 1 1 10.5 16Z" fill="#c4c8ca"/><circle r="8.3" fill="#fff"/></g><g transform="translate(2264.8,1146)"><path d="M0 31L-13 19A23 23 0 1 1 13 19Z" fill="#fff" stroke="#e3e3e3" stroke-width="1"/><path d="M0 25L-10.5 16A19.3 19.3 0 1 1 10.5 16Z" fill="#c4c8ca"/><circle r="8.3" fill="#fff"/></g><g transform="translate(2184,1275.4)"><path d="M0 31L-13 19A23 23 0 1 1 13 19Z" fill="#fff" stroke="#e3e3e3" stroke-width="1"/><path d="M0 25L-10.5 16A19.3 19.3 0 1 1 10.5 16Z" fill="#c4c8ca"/><circle r="8.3" fill="#fff"/></g><g transform="translate(1778,1092)"><path d="M0 31L-13 19A23 23 0 1 1 13 19Z" fill="#fff" stroke="#e3e3e3" stroke-width="1"/><path d="M0 25L-10.5 16A19.3 19.3 0 1 1 10.5 16Z" fill="#c4c8ca"/><circle r="8.3" fill="#fff"/></g><g transform="translate(2675,754)"><circle r="21" fill="#fff"/><circle r="18.5" fill="#c6c9dd"/><path d="M5 -7.5Q-1 -12 -5 -7.5Q-7.5 -3 -1 -0.5Q6.5 2 4.5 7Q0 12 -6 7M-0.5 -14V14" fill="none" stroke="#eef0f6" stroke-width="3.2"/></g></svg>
<div class="b" style="left:1321px;top:336px;width:1359px;height:1357px;overflow:hidden;">
<div class="t" style="left:859.7px;top:4.9px;font-size:27.7px;color:#8f9aa1;letter-spacing:-0.09px;-webkit-text-stroke:4px #fff;paint-order:stroke fill;">Pineapple</div>
<div class="t" style="left:859.7px;top:31.9px;font-size:27.7px;color:#8f9aa1;letter-spacing:-0.07px;-webkit-text-stroke:4px #fff;paint-order:stroke fill;">Property Group</div>
<div class="t" style="left:927.2px;top:70.4px;font-size:27.7px;color:#8f9aa1;letter-spacing:-0.04px;-webkit-text-stroke:4px #fff;paint-order:stroke fill;">Precise Eyebrow</div>
<div class="t" style="left:928.9px;top:98.9px;font-size:27.7px;color:#8f9aa1;letter-spacing:-0.38px;-webkit-text-stroke:4px #fff;paint-order:stroke fill;">Threading &amp; Spa</div>
<div class="t" style="left:974.2px;top:798.8px;font-size:28.5px;color:#8f9aa1;letter-spacing:-0.84px;-webkit-text-stroke:4px #fff;paint-order:stroke fill;">The Citizen SLC</div>
<div class="t" style="left:1210.4px;top:769.9px;font-size:28.5px;color:#8f9aa1;letter-spacing:-0.25px;transform:scaleX(0.9530);transform-origin:0 50%;-webkit-text-stroke:4px #fff;paint-order:stroke fill;">Aspen Flats</div>
<div class="t" style="left:615.1px;top:915.0px;font-size:28px;color:#8f9aa1;letter-spacing:-0.14px;-webkit-text-stroke:4px #fff;paint-order:stroke fill;">Salt Lake Ghosts:</div>
<div class="t" style="left:636.6px;top:942.8px;font-size:28px;color:#8f9aa1;letter-spacing:-0.19px;-webkit-text-stroke:4px #fff;paint-order:stroke fill;">Ghost Tours &amp;...</div>
<div class="t" style="left:817.9px;top:1300.4px;font-size:26.5px;color:#6bab90;letter-spacing:0.65px;-webkit-text-stroke:4px #fff;paint-order:stroke fill;">4th East</div>
<div class="t" style="left:796.2px;top:1329.3px;font-size:26.5px;color:#6bab90;letter-spacing:1.30px;-webkit-text-stroke:4px #fff;paint-order:stroke fill;">Community</div>
<div class="t" style="left:-73.0px;top:310.5px;font-size:29px;color:#9aa3ab;letter-spacing:0.4px;-webkit-text-stroke:4px #fff;paint-order:stroke fill;">Catholic</div>
<div class="t" style="left:1.0px;top:1201.5px;font-size:29px;color:#9aa3ab;letter-spacing:0.3px;-webkit-text-stroke:4px #fff;paint-order:stroke fill;">e Services</div>
<div class="t" style="left:132.2px;top:647.6px;font-size:31.5px;color:#8c8c8c;font-weight:700;letter-spacing:1.40px;-webkit-text-stroke:4px #fff;paint-order:stroke fill;">500 S</div>
<div class="t" style="left:1196.6px;top:642.5px;font-size:31.5px;color:#8c8c8c;font-weight:700;letter-spacing:1.22px;-webkit-text-stroke:4px #fff;paint-order:stroke fill;">500 S</div>
<div class="t" style="left:409.4px;top:120.0px;width:600px;text-align:center;font-size:31.4px;color:#8c8c8c;font-weight:700;letter-spacing:-0.62px;transform:rotate(90deg);-webkit-text-stroke:4px #fff;paint-order:stroke fill;"><span style="position:relative;left:-0.3px">S 400 E</span></div>
<div class="t" style="left:409.4px;top:1185.7px;width:600px;text-align:center;font-size:31.4px;color:#8c8c8c;font-weight:700;letter-spacing:-0.62px;transform:rotate(90deg);-webkit-text-stroke:4px #fff;paint-order:stroke fill;"><span style="position:relative;left:-0.3px">S 400 E</span></div>
<div class="t" style="left:948.6px;top:132.8px;width:600px;text-align:center;font-size:31.4px;color:#8c8c8c;font-weight:700;letter-spacing:-1.04px;transform:rotate(-87.5deg);-webkit-text-stroke:4px #fff;paint-order:stroke fill;"><span style="position:relative;left:-0.5px">Denver St</span></div>
<div class="t" style="left:942.8px;top:1180.8px;width:600px;text-align:center;font-size:31.4px;color:#8c8c8c;font-weight:700;letter-spacing:-1.04px;transform:rotate(90deg);-webkit-text-stroke:4px #fff;paint-order:stroke fill;"><span style="position:relative;left:-0.5px">Denver St</span></div>
<div class="t" style="left:-99.8px;top:562.9px;width:600px;text-align:center;font-size:28.2px;color:#98a1a8;font-weight:700;letter-spacing:-1.02px;transform:rotate(91deg);-webkit-text-stroke:4px #fff;paint-order:stroke fill;"><span style="position:relative;left:-0.5px">Blair St</span></div>
</div>
<svg width="0" height="0" style="left:0;top:0"><defs>
<linearGradient id="sky" x1="0" y1="0" x2="0" y2="1"><stop offset="0" stop-color="#4677b8"/><stop offset=".3" stop-color="#5a8cc8"/><stop offset=".55" stop-color="#7fa7c8"/><stop offset=".72" stop-color="#a6b98c"/><stop offset=".86" stop-color="#bcc466"/></linearGradient>
<linearGradient id="cm" x1="0" y1="0" x2="0" y2="1"><stop offset="0" stop-color="#fff" stop-opacity=".2"/><stop offset=".35" stop-color="#fff" stop-opacity=".5"/><stop offset=".8" stop-color="#fff" stop-opacity="1"/></linearGradient>
<mask id="cmask"><rect width="400" height="219" fill="url(#cm)"/></mask>
<filter id="bl" x="-30%" y="-30%" width="160%" height="160%"><feGaussianBlur stdDeviation="9"/></filter>
<filter id="bl3" x="-30%" y="-30%" width="160%" height="160%"><feGaussianBlur stdDeviation="3"/></filter>
<filter id="cl" x="0" y="0" width="100%" height="100%"><feTurbulence type="fractalNoise" baseFrequency="0.018 0.05" numOctaves="4" seed="11"/><feColorMatrix values="0 0 0 0 0.74  0 0 0 0 0.79  0 0 0 0 0.46  2.6 2.6 0 0 -2.35"/></filter>
<filter id="leaf" x="-10%" y="-10%" width="130%" height="120%"><feTurbulence type="fractalNoise" baseFrequency="0.09" numOctaves="3" seed="4" result="n"/><feDisplacementMap in="SourceGraphic" in2="n" scale="14"/></filter>
<filter id="grain" x="0" y="0" width="100%" height="100%"><feTurbulence type="fractalNoise" baseFrequency="0.5" numOctaves="2" seed="2"/><feColorMatrix values="0 0 0 0 0  0 0 0 0 0  0 0 0 0 0  0 0.9 0 0 -0.25"/></filter>
<pattern id="win" width="13" height="15" patternUnits="userSpaceOnUse" patternTransform="skewY(42)"><rect width="13" height="15" fill="#57595c"/><rect x="2" y="3" width="7.5" height="8" fill="#a3aaaa"/><rect x="5.3" y="3" width="1.1" height="8" fill="#57595c"/><rect x="0" y="13.6" width="13" height="1.4" fill="#444548"/></pattern>
<symbol id="photo" viewBox="0 0 400 219" preserveAspectRatio="none">
<rect width="400" height="219" fill="url(#sky)"/>
<g filter="url(#bl)"><ellipse cx="378" cy="48" rx="62" ry="70" fill="#98a4b6" opacity=".95"/><ellipse cx="50" cy="32" rx="62" ry="36" fill="#a9ae86" opacity=".85"/><ellipse cx="195" cy="18" rx="100" ry="30" fill="#3f70b4" opacity=".8"/><ellipse cx="300" cy="85" rx="40" ry="18" fill="#9fb4cc" opacity=".55"/><ellipse cx="215" cy="170" rx="36" ry="12" fill="#cdd27e" opacity=".85"/></g>
<rect width="400" height="200" filter="url(#cl)" mask="url(#cmask)"/>
<g filter="url(#bl3)" fill="#d6d8b0" opacity=".8"><ellipse cx="142" cy="40" rx="16" ry="7" transform="rotate(25 142 40)"/><ellipse cx="104" cy="58" rx="17" ry="6" transform="rotate(25 104 58)"/><ellipse cx="165" cy="88" rx="16" ry="9"/></g>
<polygon points="0,0 11,0 74,65 74,72 86,82 108,102 108,165 0,196" fill="url(#win)"/>
<polygon points="15.5,5 38.3,28.5 38.3,138 15.5,130" fill="#2d2d30" opacity=".78"/>
<polygon points="65.8,57 74,65 74,72 84.7,81 84.7,152 65.8,147" fill="#29292c" opacity=".85"/>
<polygon points="0,0 11,0 74,65 74,72 86,82 108,102 108,105.5 0,3" fill="#3d3d40"/>
<polygon points="0,126 100,156 100,186 0,198" fill="#343436"/>
<g fill="#929290"><polygon points="0,122 101,150 101,158 0,131"/><rect x="24" y="138" width="3.2" height="54"/><rect x="48" y="146" width="3.2" height="42"/><rect x="66" y="151" width="3" height="35"/><rect x="82" y="156" width="2.6" height="29"/></g>
<g fill="#c6b84a" opacity=".9"><rect x="3" y="142" width="8" height="15"/><rect x="13" y="146" width="8" height="14"/><rect x="29" y="149" width="8" height="15"/><rect x="39" y="152" width="7" height="14"/><rect x="33" y="174" width="9" height="8"/><rect x="53" y="158" width="7" height="11"/></g>
<g filter="url(#leaf)"><ellipse cx="112" cy="172" rx="7" ry="12" fill="#45552a"/><ellipse cx="106" cy="186" rx="26" ry="9" fill="#54564a"/><ellipse cx="150" cy="180" rx="9" ry="5" fill="#8a7264"/><ellipse cx="168" cy="174" rx="9" ry="13" fill="#5c6d2a"/><ellipse cx="188" cy="179" rx="6" ry="8" fill="#4c5e28"/><ellipse cx="204" cy="181" rx="5" ry="6" fill="#4c5e28"/><ellipse cx="160" cy="186" rx="46" ry="3.5" fill="#45463c"/></g>
<polygon points="0,190 150,187 215,187.5 262,188 400,202 400,219 0,219" fill="#3b3b40"/>
<polygon points="150,188 215,187.5 240,219 100,219" fill="#46464b"/>
<polygon points="0,197 150,188 158,188.6 0,208" fill="#5c5c56"/>
<polygon points="0,190 150,184.5 150,188 0,198" fill="#3f4236"/>
<polygon points="226,187.5 400,189 400,219 300,219" fill="#69722f"/>
<polygon points="256,195 400,196 400,210 296,214" fill="#74746e"/>
<polygon points="300,214 400,208 400,219 304,219" fill="#45463c"/>
<g filter="url(#leaf)"><rect x="226" y="170" width="180" height="19" fill="#4a5a28"/><ellipse cx="222" cy="176" rx="9" ry="13" fill="#55652a"/><rect x="268" y="118" width="36" height="62" fill="#a99c3c"/><ellipse cx="244" cy="160" rx="16" ry="28" fill="#7d8a2d"/><ellipse cx="240" cy="150" rx="10" ry="14" fill="#a3a83a"/><ellipse cx="232" cy="174" rx="10" ry="14" fill="#5e6d28"/><ellipse cx="266" cy="166" rx="12" ry="22" fill="#6e7c2c"/><ellipse cx="262" cy="152" rx="8" ry="10" fill="#9aa238"/><ellipse cx="292" cy="172" rx="15" ry="16" fill="#55642a"/><ellipse cx="318" cy="138" rx="25" ry="42" fill="#5c6c29"/><ellipse cx="312" cy="112" rx="16" ry="14" fill="#7f8c30"/><ellipse cx="310" cy="174" rx="24" ry="14" fill="#46552a"/><ellipse cx="342" cy="158" rx="26" ry="32" fill="#344122"/><ellipse cx="374" cy="130" rx="38" ry="70" fill="#1f2718"/><ellipse cx="398" cy="95" rx="18" ry="48" fill="#232c1a"/><rect x="386" y="70" width="40" height="122" fill="#212a19"/><ellipse cx="388" cy="186" rx="30" ry="8" fill="#2f3824"/></g>
<g stroke="#2a2a28" fill="none"><path d="M270.5 30L317 211" stroke-width="4.2"/><path d="M254 39L290 32M263 53L290 48.5" stroke-width="2"/><path d="M235.5 124L238 188" stroke-width="1.6"/><path d="M229 125.5H243M231 131H241" stroke-width="1.1"/>
<g stroke-width=".9" opacity=".85"><path d="M262 0Q250 60 236 108M278 0Q262 60 242 112M300 0Q282 50 258 100M322 0Q296 60 262 126"/></g><g stroke-width="1.5"><path d="M362 0Q322 66 264 126M346 0Q322 44 296 76M352 0Q326 50 290 100"/></g></g>
<g stroke="#e4e4e4" stroke-width="1.1" fill="none" opacity=".85"><path d="M219 190L238 219M224 190L250 219M182 193L106 219M188 213H228L232 209"/></g>
<rect width="400" height="219" filter="url(#grain)" opacity=".3"/>
</symbol></defs></svg>
<div class="b" style="left:1764.6px;top:656.4px;width:448.0px;height:461.8px;background:#000;border-radius:7px;"></div>
<svg style="left:1980px;top:1116px" width="44" height="22" viewBox="1980 1116 44 22"><path d="M1988 1117.5H2014L2001.2 1134.6Z" fill="#000"/></svg>
<div class="t" style="left:1787.5px;top:674.3px;font-size:26px;color:#fff;letter-spacing:-0.31px;">530 400 East</div>
<div class="t" style="left:1787.3px;top:706.8px;font-size:26px;color:#fff;letter-spacing:-0.58px;">Salt Lake City, UT</div>
<div class="t" style="left:1787.7px;top:737.0px;font-size:23px;color:#cfcfcf;letter-spacing:-0.66px;">9:44 AM - 2:08 PM</div>
<div class="b" style="left:1789.0px;top:779.6px;width:400.0px;height:1.6px;background:#4a4a4a;"></div>
<div class="t" style="left:1787.4px;top:789.8px;font-size:21.5px;color:#cfcfcf;letter-spacing:-0.25px;transform:scaleX(0.9039);transform-origin:0 50%;">DRIVER</div>
<div class="t" style="left:1787.3px;top:815.2px;font-size:26px;color:#fff;letter-spacing:-0.36px;">Simon Test</div>
<svg style="left:1788.9px;top:873.9px" width="400.1" height="219.1"><use href="#photo" width="400.1" height="219.1"/></svg>
<div class="b" style="left:2075.0px;top:1039.2px;width:96.8px;height:38.8px;background:rgba(28,28,28,.72);border-radius:8px;"></div>
<div class="t" style="left:2078.6px;top:1048.1px;font-size:20.5px;color:#fff;font-weight:700;letter-spacing:0.23px;">09:51 AM</div>
<svg style="left:1975px;top:1133px" width="54" height="54" viewBox="1975 1133 54 54"><circle cx="2001.8" cy="1160" r="24.6" fill="#cfcfcf" opacity=".5"/><circle cx="2001.8" cy="1159.5" r="23.8" fill="#e2e2e2"/><circle cx="2001.8" cy="1159.5" r="21.4" fill="#555"/><path d="M1989.9 1151.7L2001.8 1172.5L2014.1 1151.7L2001.8 1157.3Z" fill="#fff"/></svg>
<div class="b" style="left:1748.2px;top:648.0px;width:487.8px;height:499.2px;border:8.2px solid #fdb91f;border-radius:26px;"></div>
<div class="b" style="left:1369.4px;top:1347.0px;width:434.0px;height:299.0px;background:#fff;border-radius:8px;box-shadow:0 2px 10px rgba(0,0,0,.3);"></div>
<svg style="left:1369.4px;top:1403px;border-radius:0 0 8px 8px;overflow:hidden" width="434" height="243"><use href="#photo" width="434" height="243"/></svg>
<div class="t" style="left:1385.3px;top:1361.2px;font-size:29.5px;color:#1a1a1a;font-weight:700;letter-spacing:-0.80px;">Cameras</div>
<div class="t" style="left:1699.9px;top:1363.4px;font-size:21px;color:#555;letter-spacing:-0.25px;transform:scaleX(0.9302);transform-origin:0 50%;">ROAD</div>
<svg style="left:1765px;top:1362px" width="30" height="26" viewBox="1765 1362 30 26"><path d="M1772.2 1371.6L1780.5 1380L1788.8 1371.6" fill="none" stroke="#333" stroke-width="2.3"/></svg>
<div class="b" style="left:1740.5px;top:1419.0px;width:48.3px;height:48.3px;background:rgba(38,38,38,.88);border-radius:8px;"></div>
<svg style="left:1740.5px;top:1419px" width="48.3" height="48.3" viewBox="-24.15 -24.15 48.3 48.3"><path d="M-11.5 -5V-9.5Q-11.5 -11.5 -9.5 -11.5H-5M5 -11.5H9.5Q11.5 -11.5 11.5 -9.5V-5M11.5 5V9.5Q11.5 11.5 9.5 11.5H5M-5 11.5H-9.5Q-11.5 11.5 -11.5 9.5V5" fill="none" stroke="#fff" stroke-width="2.3"/></svg>
<div class="b" style="left:1644.5px;top:1340.0px;width:171.0px;height:88.2px;border:8.3px solid #fdb91f;border-radius:25px;"></div>
<div class="b" style="left:2583.5px;top:359.0px;width:73.0px;height:73.2px;background:#fff;border-radius:8px;box-shadow:0 1px 4px rgba(0,0,0,.3);"></div>
<div class="b" style="left:2583.5px;top:455.3px;width:73.0px;height:145.1px;background:#fff;border-radius:8px;box-shadow:0 1px 4px rgba(0,0,0,.3);"></div>
<div class="b" style="left:2583.5px;top:528.0px;width:73.0px;height:1.5px;background:#e6e6e6;"></div>
<div class="b" style="left:2583.5px;top:623.4px;width:73.0px;height:145.4px;background:#fff;border-radius:8px;box-shadow:0 1px 4px rgba(0,0,0,.3);"></div>
<div class="b" style="left:2583.5px;top:695.6px;width:73.0px;height:1.5px;background:#e6e6e6;"></div>
<svg style="left:2583.5px;top:359px" width="73" height="410" viewBox="2583.5 359 73 410"><g fill="none" stroke="#444" stroke-width="2.3" stroke-linejoin="round">
<path d="M2619.7 382L2634 389.3L2619.7 396.6L2605.4 389.3Z"/><path d="M2608.5 394.5L2605.4 396.1L2619.7 403.4L2634 396.1L2630.9 394.5"/><path d="M2608.5 401.3L2605.4 402.9L2619.7 410.2L2634 402.9L2630.9 401.3"/>
<path d="M2605 492.2H2634.4M2619.7 477.5V506.9" stroke-width="2.2"/><path d="M2605 565H2634.4" stroke-width="2.2"/>
<path d="M2605.5 655V648Q2605.5 646 2607.5 646H2614.5M2625 646H2632Q2634 646 2634 648V655M2634 665.5V672.5Q2634 674.5 2632 674.5H2625M2614.5 674.5H2607.5Q2605.5 674.5 2605.5 672.5V665.5" stroke-width="2.6"/></g>
<g fill="#fbb116" stroke="#e59a0a" stroke-width=".8"><circle cx="2619.7" cy="722" r="6.2"/><path d="M2612.5 730.5Q2619.7 727.5 2626.9 730.5Q2629.5 732 2630 742L2628.2 743.2L2625.8 738.5L2624.8 754H2620.3L2619.7 745L2619.1 754H2614.6L2613.6 738.5L2611.2 743.2L2609.4 742Q2609.9 732 2612.5 730.5Z"/></g><path d="M2616.3 729.8L2619.7 735L2623.1 729.8Z" fill="#e0662e"/></svg>
<div class="b" style="left:2628.9px;top:899.4px;width:51.1px;height:279.6px;background:#0b55c8;"></div>
<div class="b" style="left:2630.0px;top:922.9px;width:50.0px;height:232.1px;background:#3a6ed8;border-radius:12px 0 0 12px;"></div>
<div class="t" style="left:2367.7px;top:1025.5px;width:600px;text-align:center;font-size:29.5px;color:#fff;letter-spacing:0.3px;transform:rotate(-90deg);">Feedback</div>
<div class="b" style="left:2523.3px;top:1598.3px;width:132.8px;height:72.4px;background:#fff;border-radius:8px;box-shadow:0 1px 4px rgba(0,0,0,.3);"></div>
<div class="t" style="left:2546.3px;top:1623.4px;font-size:24px;color:#111;letter-spacing:1.08px;">Legend</div>
<div class="b" style="left:520.0px;top:336.0px;width:2160.0px;height:12.0px;background:linear-gradient(rgba(0,0,0,.25),rgba(0,0,0,.08) 35%,rgba(0,0,0,0));"></div>
<div class="b" style="left:1321.0px;top:1693.0px;width:1359.0px;height:287.0px;background:#fff;border-radius:0 0 16px 0;"></div>
<div class="b" style="left:1321.0px;top:1692.4px;width:1359.0px;height:1.6px;background:#cfcfcf;"></div>
<div class="b" style="left:1447.4px;top:1734.5px;width:1130.0px;height:7.8px;background:#a8a8a8;"></div>
<div class="b" style="left:2557.3px;top:1718.0px;width:40.0px;height:40.0px;background:#000;border-radius:50%;"></div>
<div class="b" style="left:1434.0px;top:1679.9px;width:1201.8px;height:88.1px;border:8.2px solid #fdb91f;border-radius:23px;"></div>
<div class="t" style="left:1446.0px;top:1766.8px;font-size:20.2px;color:#777;letter-spacing:1.54px;">09:44 AM</div>
<div class="t" style="left:2484.7px;top:1766.8px;font-size:20.2px;color:#777;letter-spacing:1.33px;">02:08 PM</div>
<div class="b" style="left:1321.0px;top:1810.6px;width:1359.0px;height:2.0px;background:#ededed;"></div>
<div class="b" style="left:1441.8px;top:1812.0px;width:3.0px;height:168.0px;background:#e4e4e4;"></div>
<svg style="left:1365px;top:1875px" width="40" height="44" viewBox="1365 1875 40 44"><path d="M1370.8 1883.4Q1370.8 1881 1373 1882.2L1397.6 1895.8Q1399.6 1897.4 1397.6 1898.9L1373 1912.5Q1370.8 1913.7 1370.8 1911.3Z" fill="#222"/></svg>
<div class="t" style="left:1474.3px;top:1846.6px;font-size:20.5px;color:#777;letter-spacing:0.17px;">DATE / TIME</div>
<div class="t" style="left:1474.8px;top:1883.8px;font-size:26px;color:#222;letter-spacing:0.22px;">Oct 23, 2025</div>
<div class="t" style="left:1475.0px;top:1915.7px;font-size:26px;color:#222;letter-spacing:-0.55px;">02:08 PM CDT</div>
<div class="b" style="left:1673.3px;top:1845.5px;width:1.6px;height:102.5px;background:#dcdcdc;"></div>
<div class="t" style="left:1706.7px;top:1846.3px;font-size:21px;color:#777;letter-spacing:-0.19px;">LOCATION</div>
<div class="b" style="left:1696.2px;top:1880px;width:499.7px;height:60px;border-radius:14px;overflow:hidden;background:radial-gradient(ellipse 50px 30px at 16% 75%,#d6d6d6,rgba(214,214,214,0)),radial-gradient(ellipse 40px 36px at 29% 80%,#ececec,rgba(236,236,236,0)),radial-gradient(ellipse 60px 26px at 42% 35%,#d8d8d8,rgba(216,216,216,0)),radial-gradient(ellipse 36px 30px at 50% 20%,#ebebeb,rgba(235,235,235,0)),radial-gradient(ellipse 70px 26px at 62% 30%,#d9d9d9,rgba(217,217,217,0)),radial-gradient(ellipse 60px 22px at 88% 30%,#d9d9d9,rgba(217,217,217,0)),#e2e2e2;"><div class="b" style="left:300px;top:34px;width:260px;height:60px;background:#fff;filter:blur(9px);"></div><div class="b" style="left:-6px;top:-6px;width:14px;height:72px;background:#ededed;filter:blur(4px);opacity:.6"></div></div>
<div class="b" style="left:2196.3px;top:1903.6px;width:2.4px;height:2.8px;background:#333;"></div>
<div class="b" style="left:1823.0px;top:1939.5px;width:2.0px;height:2.6px;background:#333;"></div>
<div class="b" style="left:2262.2px;top:1845.5px;width:1.6px;height:102.5px;background:#dcdcdc;"></div>
<div class="t" style="left:2294.0px;top:1846.6px;font-size:20.5px;color:#777;letter-spacing:0.25px;">FUEL</div>
<div class="t" style="left:2293.4px;top:1883.8px;font-size:26px;color:#bdbdbd;letter-spacing:0.17px;">N/A</div>
<div class="b" style="left:2376.0px;top:1869.0px;width:54.5px;height:55.5px;border:1.9px solid #cacaca;border-radius:7px;background:#fff;"></div>
<div class="b" style="left:2462.4px;top:1845.5px;width:2.6px;height:102.5px;background:#dcdcdc;"></div>
<div class="b" style="left:2497.0px;top:1869.0px;width:54.5px;height:55.5px;border:1.9px solid #cacaca;border-radius:7px;background:#fff;"></div>
<div class="b" style="left:2576.3px;top:1869.0px;width:55.3px;height:55.5px;border:1.9px solid #cacaca;border-radius:7px;background:#fff;"></div>
<svg style="left:2370px;top:1860px" width="270" height="75" viewBox="2370 1860 270 75"><g fill="none" stroke="#555" stroke-width="2.4">
<path d="M2393.8 1882.8H2390V1910.3H2418.3V1906.8" stroke-width="2.4"/><path d="M2390 1889.7H2396Q2400 1890 2403 1893.5Q2406 1896.5 2410.5 1896.5H2418.5" stroke-width="2.2"/><path d="M2390 1896.5H2393.8M2403.9 1910.3V1906.8" stroke-width="2"/>
<rect x="2508" y="1885.3" width="32.5" height="22.6" stroke-width="2.8"/><path d="M2520.3 1891.2L2529.3 1896.6L2520.3 1902Z" stroke-width="2.2" stroke-linejoin="round"/>
<rect x="2588" y="1885.3" width="32.3" height="22.6" stroke-width="2.8"/><circle cx="2597.7" cy="1893" r="2.6" stroke-width="2"/><path d="M2589.5 1906.5L2598.5 1899L2603.5 1903L2610.5 1895.5L2619.5 1904.5" stroke-width="2.4"/></g></svg>
</div></body></html>
